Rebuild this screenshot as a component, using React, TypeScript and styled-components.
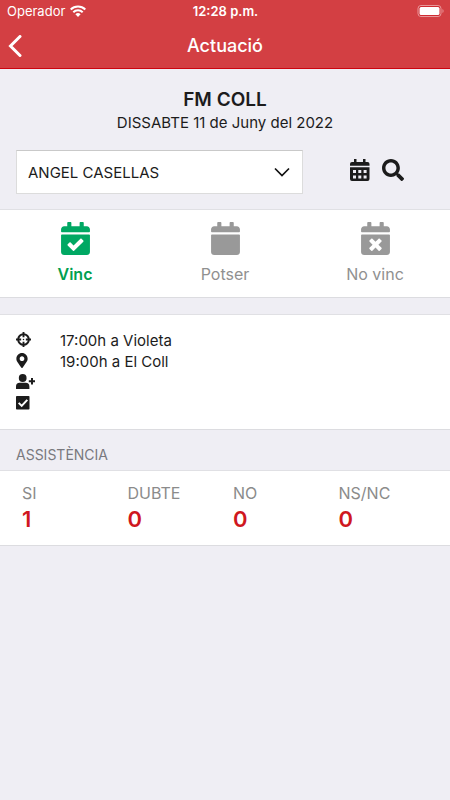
import React, { useState } from "react";
import styled, { createGlobalStyle } from "styled-components";
import {
  FaCalendar,
  FaCalendarCheck,
  FaCalendarTimes,
  FaMapMarkerAlt,
  FaSearch,
} from "react-icons/fa";

const GlobalStyle = createGlobalStyle`
  *, *::before, *::after { box-sizing: border-box; }
  body {
    margin: 0;
    background: #efeef4;
    color: #1c1c1c;
    font-family: Inter, "Liberation Sans", sans-serif;
    font-size: 15px;
  }
  button, select { font: inherit; color: inherit; }
  svg { display: block; }
`;

const Header = styled.header`
  background: #d33f43;
  border-bottom: 1px solid #cc0510;
  color: #fff;
`;

const StatusBar = styled.div`
  display: grid;
  grid-template-columns: 1fr auto 1fr;
  align-items: center;
  height: 22px;
  padding: 0 6px 0 7px;
  font-size: 13px;
`;

const Carrier = styled.div`
  display: flex;
  align-items: center;
  gap: 5px;
`;

const Clock = styled.time`
  font-weight: 600;
`;

const Battery = styled.div`
  justify-self: end;
`;

const NavBar = styled.div`
  display: grid;
  grid-template-columns: 1fr auto 1fr;
  align-items: center;
  height: 46px;
  padding: 1px 7px 0;
`;

const BackButton = styled.button`
  justify-self: start;
  padding: 0;
  border: 0;
  background: none;
  cursor: pointer;
`;

const NavTitle = styled.h1`
  margin: 0;
  font-size: 18px;
  font-weight: 500;
`;

const Intro = styled.section`
  padding: 19px 16px 15px;
  text-align: center;
`;

const EventName = styled.h2`
  margin: 0;
  font-size: 19px;
  line-height: 24px;
  font-weight: 600;
`;

const EventDate = styled.p`
  margin: 0 0 16px;
  font-size: 15px;
  line-height: 22px;
`;

const PersonRow = styled.div`
  display: flex;
  align-items: center;
`;

const SelectWrap = styled.div`
  display: grid;
  flex: 1;
  align-items: center;

  > * { grid-area: 1 / 1; }

  > svg {
    justify-self: end;
    margin-right: 13px;
    pointer-events: none;
  }
`;

const PersonSelect = styled.select`
  appearance: none;
  width: 100%;
  height: 44px;
  padding: 0 40px 0 11px;
  border: 1px solid #dcdcdc;
  border-top-color: #c9c9c9;
  border-radius: 0;
  background: #fff;
  font-size: 15px;
`;

const Tools = styled.div`
  display: flex;
  align-items: center;
  gap: 12px;
  padding: 0 30px 4px 47px;
`;

const IconButton = styled.button`
  padding: 0;
  border: 0;
  background: none;
  cursor: pointer;
`;

const Card = styled.section`
  border-top: 1px solid #e0e0e4;
  border-bottom: 1px solid #dcdce0;
  background: #fff;
`;

const Choices = styled(Card)`
  display: grid;
  grid-template-columns: repeat(3, 1fr);
  margin-bottom: 16px;
`;

const Choice = styled.button<{ $active: boolean }>`
  display: flex;
  flex-direction: column;
  align-items: center;
  gap: 7px;
  padding: 12px 0 11px;
  border: 0;
  background: none;
  color: ${(p) => (p.$active ? "#009f50" : "#909090")};
  font-size: 16px;
  line-height: 24px;
  font-weight: ${(p) => (p.$active ? 600 : 400)};
  cursor: pointer;

  svg {
    width: 29px;
    height: 33px;
    color: ${(p) => (p.$active ? "#00a863" : "#999")};
  }
`;

const Details = styled(Card)`
  padding: 15px 16px 16px;
`;

const DetailList = styled.ul`
  display: grid;
  gap: 1px;
  margin: 0;
  padding: 0;
  list-style: none;
`;

const DetailItem = styled.li<{ $iconWidth: number }>`
  display: grid;
  grid-template-columns: 44px 1fr;
  align-items: center;
  height: 20px;
  font-size: 15px;

  svg {
    width: ${(p) => p.$iconWidth}px;
    height: 15px;
    margin-bottom: 2px;
  }
`;

const GroupTitle = styled.h3`
  margin: 0;
  padding: 15px 16px 5px;
  color: #79797e;
  font-size: 14px;
  line-height: 20px;
  font-weight: 400;
`;

const Stats = styled.dl`
  display: grid;
  grid-template-columns: repeat(4, 1fr);
  margin: 0;
  padding: 10px 6px 12px 22px;
`;

const StatLabel = styled.dt`
  color: #8b8b8b;
  font-size: 16px;
  line-height: 24px;
`;

const StatValue = styled.dd`
  margin: 0;
  color: #cf1720;
  font-size: 22px;
  line-height: 28px;
  font-weight: 600;
`;

const WifiIcon = () => (
  <svg width="16" height="12" viewBox="0 0 16 12" fill="none" stroke="#fff" strokeWidth="2" aria-hidden="true">
    <path d="M.7 4.500a10.400 10.400 0 0 1 14.600 0" />
    <path d="M3.300 7.200a6.700 6.700 0 0 1 9.400 0" />
    <path d="M5.400 9.300a3.700 3.700 0 0 1 5.200 0L8 12z" fill="#fff" stroke="none" />
  </svg>
);

const BatteryIcon = () => (
  <svg width="27" height="12" viewBox="0 0 27 12" aria-hidden="true">
    <rect x="1" y=".5" width="23" height="11" rx="3" fill="none" stroke="#e8989b" />
    <rect x="2" y="1.500" width="21" height="9" rx="1.500" fill="#cb1b22" />
    <rect x="2.500" y="2" width="20" height="8" rx="1.500" fill="#fff" />
    <path d="M25.500 4v4c1.400-.5 1.400-3.500 0-4z" fill="#e8989b" />
  </svg>
);

const BackIcon = () => (
  <svg width="16" height="22" viewBox="0 0 16 22" fill="none" stroke="#fff" strokeWidth="3" strokeLinecap="round" aria-hidden="true">
    <path d="M13 1.500 3.500 11l9.500 9.500" />
  </svg>
);

const ChevronIcon = () => (
  <svg width="16" height="10" viewBox="0 0 16 10" fill="none" stroke="#111" strokeWidth="1.700" aria-hidden="true">
    <path d="m1 1.500 7 7 7-7" />
  </svg>
);

const CalendarGridIcon = () => (
  <svg width="20" height="22" viewBox="0 0 20 22" fill="#1c1c1c" aria-hidden="true">
    <path d="M4 0h2.500v3h6.500V0h2.500v3H17.500a2 2 0 0 1 2 2v1.700H0V5a2 2 0 0 1 2-2h2z" />
    <path
      fillRule="evenodd"
      d="M0 8.200h19.500v11.800a2 2 0 0 1-2 2h-15.500a2 2 0 0 1-2-2zM3 11v3h3v-3zM8.300 11v3h3v-3zM13.600 11v3h3v-3zM3 16.500v3h3v-3zM8.300 16.500v3h3v-3zM13.600 16.500v3h3v-3z"
    />
  </svg>
);

const TargetIcon = () => (
  <svg viewBox="0 0 16 16" fill="none" stroke="#1c1c1c" aria-hidden="true">
    <circle cx="8" cy="8" r="5.700" strokeWidth="2.100" />
    <path d="M8 0v5.500M8 10.500V16M0 8h5.500M10.500 8H16" strokeWidth="2" />
    <circle cx="8" cy="8" r=".8" fill="#1c1c1c" stroke="none" />
  </svg>
);

const PersonAddIcon = () => (
  <svg viewBox="0 0 19 15" fill="#1c1c1c" aria-hidden="true">
    <circle cx="6.700" cy="4" r="3.900" />
    <path d="M0 15v-2.500a3.700 3.700 0 0 1 3.700-3.700h6a3.700 3.700 0 0 1 3.700 3.700V15z" />
    <path d="M16 4v6.400M12.800 7.200h6.200" stroke="#1c1c1c" strokeWidth="2" />
  </svg>
);

const CheckBoxIcon = () => (
  <svg viewBox="0 0 14 15" aria-hidden="true">
    <rect y="1" width="13.500" height="13.500" rx=".8" fill="#1c1c1c" />
    <path d="m2.700 7.900 3 3 5.600-6" fill="none" stroke="#fff" strokeWidth="2" />
  </svg>
);

const choices = [
  { label: "Vinc", Icon: FaCalendarCheck },
  { label: "Potser", Icon: FaCalendar },
  { label: "No vinc", Icon: FaCalendarTimes },
];

const details = [
  { Icon: TargetIcon, iconWidth: 15, text: "17:00h a Violeta" },
  { Icon: FaMapMarkerAlt, iconWidth: 12, text: "19:00h a El Coll" },
  { Icon: PersonAddIcon, iconWidth: 19, text: "" },
  { Icon: CheckBoxIcon, iconWidth: 14, text: "" },
];

const stats = [
  { label: "SI", value: 1 },
  { label: "DUBTE", value: 0 },
  { label: "NO", value: 0 },
  { label: "NS/NC", value: 0 },
];

export default function App() {
  const [answer, setAnswer] = useState("Vinc");

  return (
    <>
      <GlobalStyle />
      <Header>
        <StatusBar>
          <Carrier>
            Operador <WifiIcon />
          </Carrier>
          <Clock>12:28 p.m.</Clock>
          <Battery>
            <BatteryIcon />
          </Battery>
        </StatusBar>
        <NavBar>
          <BackButton aria-label="Enrere">
            <BackIcon />
          </BackButton>
          <NavTitle>Actuació</NavTitle>
        </NavBar>
      </Header>
      <main>
        <Intro>
          <EventName>FM COLL</EventName>
          <EventDate>DISSABTE 11 de Juny del 2022</EventDate>
          <PersonRow>
            <SelectWrap>
              <PersonSelect aria-label="Persona">
                <option>ANGEL CASELLAS</option>
              </PersonSelect>
              <ChevronIcon />
            </SelectWrap>
            <Tools>
              <IconButton aria-label="Calendari">
                <CalendarGridIcon />
              </IconButton>
              <IconButton aria-label="Cerca">
                <FaSearch size={22} />
              </IconButton>
            </Tools>
          </PersonRow>
        </Intro>
        <Choices aria-label="Resposta">
          {choices.map(({ label, Icon }) => (
            <Choice
              key={label}
              $active={answer === label}
              aria-pressed={answer === label}
              onClick={() => setAnswer(label)}
            >
              <Icon />
              {label}
            </Choice>
          ))}
        </Choices>
        <Details>
          <DetailList>
            {details.map(({ Icon, iconWidth, text }, index) => (
              <DetailItem key={index} $iconWidth={iconWidth}>
                <Icon />
                <span>{text}</span>
              </DetailItem>
            ))}
          </DetailList>
        </Details>
        <GroupTitle>ASSISTÈNCIA</GroupTitle>
        <Card>
          <Stats>
            {stats.map(({ label, value }) => (
              <div key={label}>
                <StatLabel>{label}</StatLabel>
                <StatValue>{value}</StatValue>
              </div>
            ))}
          </Stats>
        </Card>
      </main>
    </>
  );
}
